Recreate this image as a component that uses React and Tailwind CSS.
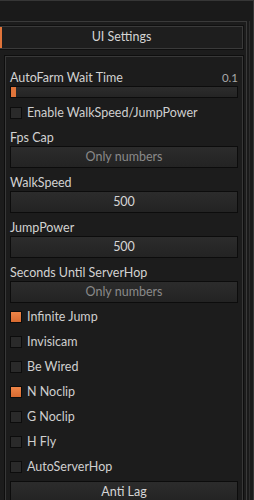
import React from 'react';

const font = { fontFamily: 'Lato, "Open Sans", sans-serif' };

function Checkbox({ label, checked, className = '' }) {
  return (
    <div className={`flex h-[12px] items-center gap-[5px] ${className}`}>
      <div
        className={`h-[12px] w-[12px] shrink-0 border border-[#0c0c0c] ${
          checked ? 'bg-gradient-to-b from-[#ee8548] to-[#d86a30]' : 'bg-[#2a2a2a]'
        }`}
      />
      <span className="text-[12.5px] leading-[12px] text-[#cfcfcf]">{label}</span>
    </div>
  );
}

function Field({ label, value, placeholder }) {
  return (
    <div>
      <div className="h-[17px] text-[12.5px] leading-[17px] text-[#d2d2d2]">{label}</div>
      <div className="flex h-[22px] items-center justify-center border border-[#0c0c0c] bg-gradient-to-b from-[#2c2c2c] to-[#232323] text-[12.5px]">
        {value ? (
          <span className="text-[#d6d6d6]">{value}</span>
        ) : (
          <span className="text-[#8a8a8a]">{placeholder}</span>
        )}
      </div>
    </div>
  );
}

export default function App() {
  const toggles = [
    ['Infinite Jump', true],
    ['Invisicam', false],
    ['Be Wired', false],
    ['N Noclip', true],
    ['G Noclip', false],
    ['H Fly', false],
    ['AutoServerHop', false],
  ];

  return (
    <div className="h-[500px] w-[254px] overflow-hidden bg-[#1a1a1a]" style={font}>
      <div className="h-full border-t border-r border-[#363636]">
        <div className="mr-[3px] h-full border-r border-[#2e2e2e]">
          <div className="mr-[2px] mt-[20px] h-full border-t border-r border-[#3a3a3a] bg-[#1c1c1c] pr-[3px] pt-[4px]">
            {/* tab header */}
            <div className="relative flex h-[23px] items-center justify-center border border-[#3a3a3a] bg-[#1e1e1e] text-[12.5px] text-[#d4d4d4] shadow-[0_0_0_1px_#101010]">
              <div className="absolute left-[-1px] top-0 h-full w-[2px] bg-[#e0743a]" />
              UI Settings
            </div>

            {/* section */}
            <div className="ml-[5px] mt-[7px] h-[460px] border border-[#383838] bg-[#1c1c1c] px-[4px] pt-[12px] shadow-[0_0_0_1px_#0e0e0e]">
              <div className="flex h-[17px] items-center justify-between text-[12.5px] leading-[17px] text-[#d2d2d2]">
                <span>AutoFarm Wait Time</span>
                <span className="text-[11.5px] text-[#a8a8a8]">0.1</span>
              </div>
              <div className="h-[12px] border border-[#0c0c0c] bg-gradient-to-b from-[#2c2c2c] to-[#242424]">
                <div className="h-full w-[5px] bg-[#e0743a]" />
              </div>

              <Checkbox label="Enable WalkSpeed/JumpPower" className="mt-[9px]" />

              <div className="mt-[10px] flex flex-col gap-[6px]">
                <Field label="Fps Cap" placeholder="Only numbers" />
                <Field label="WalkSpeed" value="500" />
                <Field label="JumpPower" value="500" />
                <Field label="Seconds Until ServerHop" placeholder="Only numbers" />
              </div>

              <div className="mt-[8px] flex flex-col gap-[13px]">
                {toggles.map(([l, c]) => (
                  <Checkbox key={l} label={l} checked={c} />
                ))}
              </div>

              <div className="mt-[8px] flex h-[22px] items-center justify-center border border-[#0c0c0c] bg-gradient-to-b from-[#2c2c2c] to-[#232323] text-[12.5px] text-[#d6d6d6]">
                Anti Lag
              </div>
            </div>
          </div>
        </div>
      </div>
    </div>
  );
}
